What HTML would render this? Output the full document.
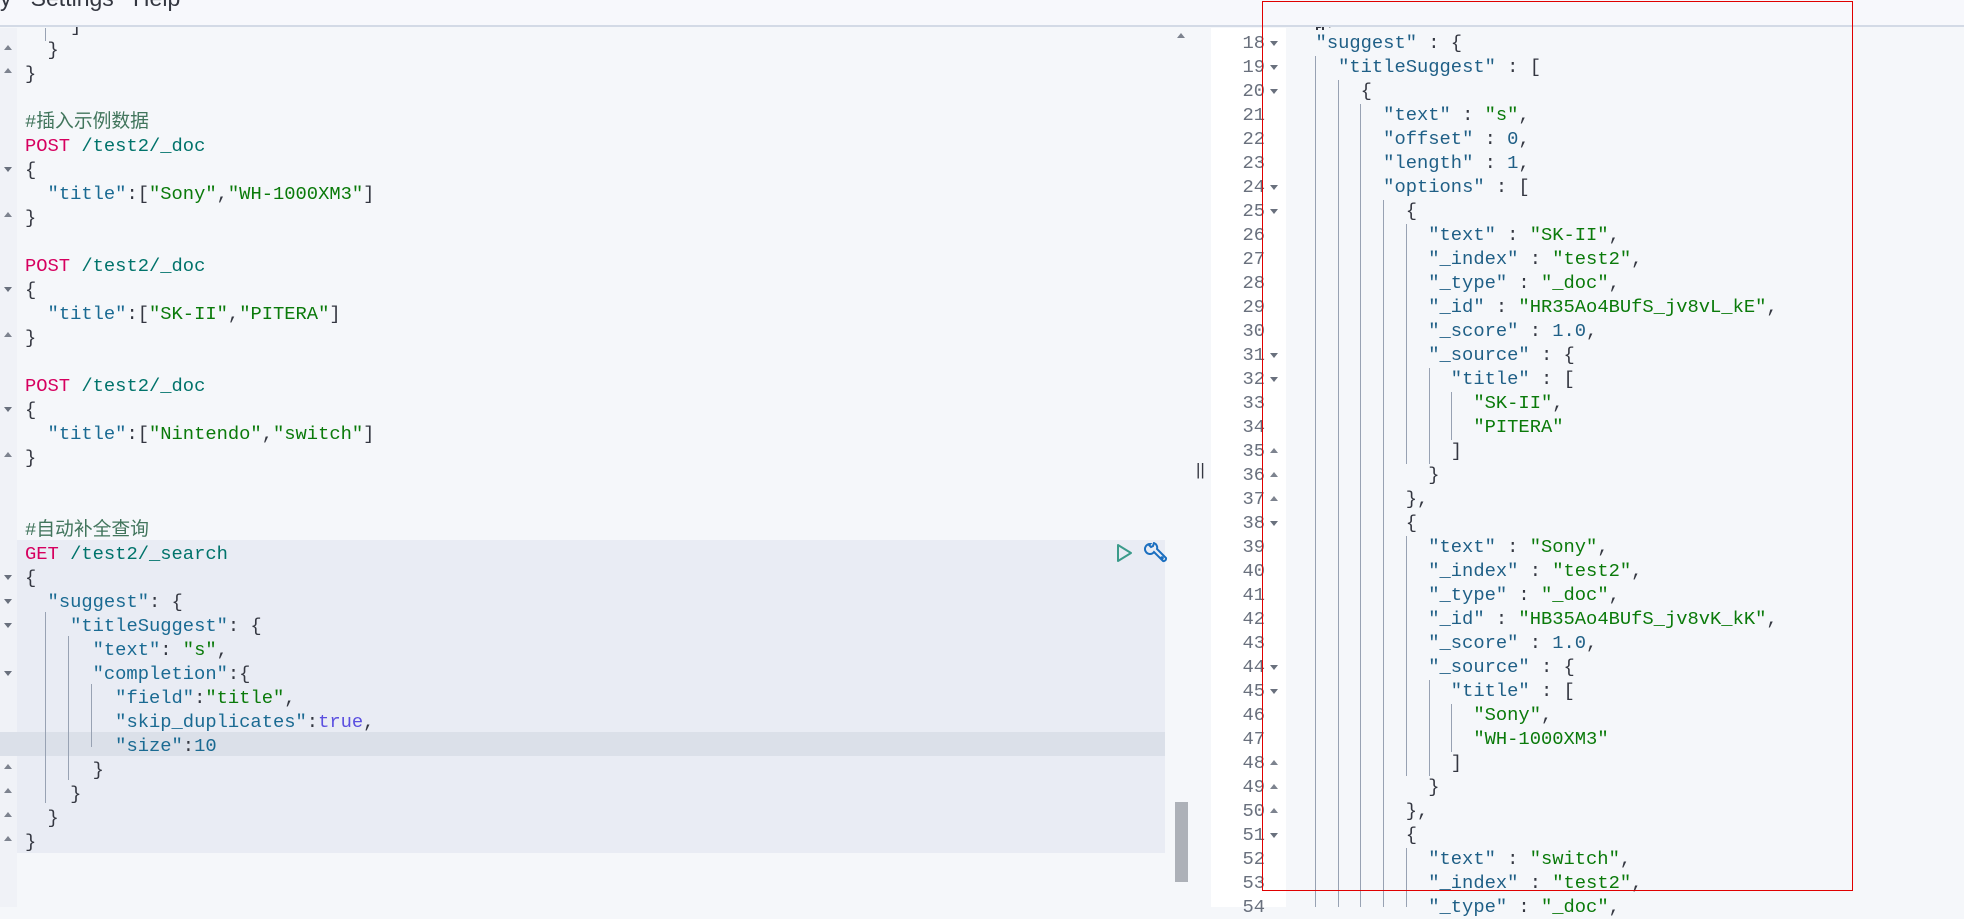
<!DOCTYPE html>
<html><head><meta charset="utf-8"><style>
*{margin:0;padding:0;box-sizing:border-box}
body{width:1964px;height:907px;overflow:hidden;background:#f5f7fa;position:relative;font-family:"Liberation Mono","Noto Sans CJK SC",monospace;font-size:18.8px;color:#343741}
.abs{position:absolute}
.l{position:absolute;height:24px;line-height:24px;white-space:pre}
.m{color:#d6005f}.u{color:#00736b}.k{color:#1a6a92}.s{color:#0a7a0a}.n{color:#1a6a92}.b{color:#5b4fe0}.c{color:#41755c;font-family:"Liberation Mono","Noto Sans CJK SC",monospace}
.rk{color:#1f5f86}.rs{color:#0a7a0a}.rn{color:#1f5f86}
.g{position:absolute;width:1px;background:#98a2b3}
.ln{position:absolute;width:52px;text-align:right;color:#69707d;height:24px;line-height:24px;left:1213px}
.ar{position:absolute;width:0;height:0;border-left:4px solid transparent;border-right:4px solid transparent}
.dn{border-top:5px solid #69707d}.up{border-bottom:5px solid #7d838f}
</style></head><body>
<!-- left gutter -->
<div class="abs" style="left:0;top:28px;width:17px;height:879px;background:#f0f2f7"></div>
<!-- shaded request block -->
<div class="abs" style="left:17px;top:540px;width:1148px;height:313px;background:#e9ecf4"></div>
<div class="abs" style="left:0;top:732px;width:1165px;height:24px;background:#dbe0e9"></div>
<!-- scrollbar -->
<div class="abs" style="left:1175px;top:802px;width:13px;height:80px;background:#adb1b8"></div>
<!-- divider -->
<div class="abs" style="left:1196px;top:460px;font-family:'Liberation Sans',sans-serif;font-size:17px;color:#343741">||</div>
<!-- right gutter -->
<div class="abs" style="left:1211px;top:28px;width:75px;height:879px;background:#fff"></div>
<div class="abs" style="left:1286px;top:28px;width:678px;height:879px;background:#f5f7fa"></div>

<!-- left code -->
<div class="g" style="left:45px;top:28px;height:13px"></div>
<div class="l" style="left:25px;top:14px">    ]</div>
<div class="l" style="left:25px;top:38px">  }</div>
<div class="l" style="left:25px;top:62px">}</div>
<div class="l c" style="left:25px;top:110px">#插入示例数据</div>
<div class="l" style="left:25px;top:134px"><span class="m">POST</span> <span class="u">/test2/_doc</span></div>
<div class="l" style="left:25px;top:158px">{</div>
<div class="l" style="left:25px;top:182px">  <span class="k">"title"</span>:[<span class="s">"Sony"</span>,<span class="s">"WH-1000XM3"</span>]</div>
<div class="l" style="left:25px;top:206px">}</div>
<div class="l" style="left:25px;top:254px"><span class="m">POST</span> <span class="u">/test2/_doc</span></div>
<div class="l" style="left:25px;top:278px">{</div>
<div class="l" style="left:25px;top:302px">  <span class="k">"title"</span>:[<span class="s">"SK-II"</span>,<span class="s">"PITERA"</span>]</div>
<div class="l" style="left:25px;top:326px">}</div>
<div class="l" style="left:25px;top:374px"><span class="m">POST</span> <span class="u">/test2/_doc</span></div>
<div class="l" style="left:25px;top:398px">{</div>
<div class="l" style="left:25px;top:422px">  <span class="k">"title"</span>:[<span class="s">"Nintendo"</span>,<span class="s">"switch"</span>]</div>
<div class="l" style="left:25px;top:446px">}</div>
<div class="l c" style="left:25px;top:518px">#自动补全查询</div>
<div class="l" style="left:25px;top:542px"><span class="m">GET</span> <span class="u">/test2/_search</span></div>
<div class="l" style="left:25px;top:566px">{</div>
<div class="l" style="left:25px;top:590px">  <span class="k">"suggest"</span>: {</div>
<div class="l" style="left:25px;top:614px">    <span class="k">"titleSuggest"</span>: {</div>
<div class="l" style="left:25px;top:638px">      <span class="k">"text"</span>: <span class="s">"s"</span>,</div>
<div class="l" style="left:25px;top:662px">      <span class="k">"completion"</span>:{</div>
<div class="l" style="left:25px;top:686px">        <span class="k">"field"</span>:<span class="s">"title"</span>,</div>
<div class="l" style="left:25px;top:710px">        <span class="k">"skip_duplicates"</span>:<span class="b">true</span>,</div>
<div class="l" style="left:25px;top:734px">        <span class="k">"size"</span>:<span class="n">10</span></div>
<div class="l" style="left:25px;top:758px">      }</div>
<div class="l" style="left:25px;top:782px">    }</div>
<div class="l" style="left:25px;top:806px">  }</div>
<div class="l" style="left:25px;top:830px">}</div>
<div class="g" style="left:45px;top:612px;height:191px"></div>
<div class="g" style="left:68px;top:636px;height:144px"></div>
<div class="g" style="left:91px;top:684px;height:63px"></div>
<!-- play & wrench -->
<svg class="abs" style="left:1115px;top:542px" width="55" height="26" viewBox="0 0 55 26">
<path d="M3 3 L16 11 L3 19 Z" fill="none" stroke="#3b9b8b" stroke-width="2" stroke-linejoin="round"/>
<g fill="none" stroke="#1b6fc0" stroke-width="2" stroke-linecap="round">
<path d="M35 2 a5 5 0 1 0 4 8 l9 9 a2.5 2.5 0 0 0 3 -3 l-9 -9 a5 5 0 0 0 -3 -6 l-1 3 -2 1 -2 -2 z"/>
<circle cx="47" cy="16" r="0.8" fill="#1b6fc0"/></g></svg>
<!-- left fold arrows -->
<div class="ar up" style="left:4px;top:45px"></div>
<div class="ar up" style="left:4px;top:68px"></div>
<div class="ar dn" style="left:4px;top:167px"></div>
<div class="ar up" style="left:4px;top:212px"></div>
<div class="ar dn" style="left:4px;top:287px"></div>
<div class="ar up" style="left:4px;top:332px"></div>
<div class="ar dn" style="left:4px;top:407px"></div>
<div class="ar up" style="left:4px;top:452px"></div>
<div class="ar dn" style="left:4px;top:575px"></div>
<div class="ar dn" style="left:4px;top:599px"></div>
<div class="ar dn" style="left:4px;top:623px"></div>
<div class="ar dn" style="left:4px;top:671px"></div>
<div class="ar up" style="left:4px;top:764px"></div>
<div class="ar up" style="left:4px;top:788px"></div>
<div class="ar up" style="left:4px;top:812px"></div>
<div class="ar up" style="left:4px;top:836px"></div>
<div class="ar up" style="left:1177px;top:33px"></div>

<!-- right code -->
<div class="l" style="left:1293px;top:7px">  },</div>
<div class="l" style="left:1293px;top:31px">  <span class="rk">"suggest"</span> : {</div>
<div class="l" style="left:1293px;top:55px">    <span class="rk">"titleSuggest"</span> : [</div>
<div class="l" style="left:1293px;top:79px">      {</div>
<div class="l" style="left:1293px;top:103px">        <span class="rk">"text"</span> : <span class="rs">"s"</span>,</div>
<div class="l" style="left:1293px;top:127px">        <span class="rk">"offset"</span> : <span class="rn">0</span>,</div>
<div class="l" style="left:1293px;top:151px">        <span class="rk">"length"</span> : <span class="rn">1</span>,</div>
<div class="l" style="left:1293px;top:175px">        <span class="rk">"options"</span> : [</div>
<div class="l" style="left:1293px;top:199px">          {</div>
<div class="l" style="left:1293px;top:223px">            <span class="rk">"text"</span> : <span class="rs">"SK-II"</span>,</div>
<div class="l" style="left:1293px;top:247px">            <span class="rk">"_index"</span> : <span class="rs">"test2"</span>,</div>
<div class="l" style="left:1293px;top:271px">            <span class="rk">"_type"</span> : <span class="rs">"_doc"</span>,</div>
<div class="l" style="left:1293px;top:295px">            <span class="rk">"_id"</span> : <span class="rs">"HR35Ao4BUfS_jv8vL_kE"</span>,</div>
<div class="l" style="left:1293px;top:319px">            <span class="rk">"_score"</span> : <span class="rn">1.0</span>,</div>
<div class="l" style="left:1293px;top:343px">            <span class="rk">"_source"</span> : {</div>
<div class="l" style="left:1293px;top:367px">              <span class="rk">"title"</span> : [</div>
<div class="l" style="left:1293px;top:391px">                <span class="rs">"SK-II"</span>,</div>
<div class="l" style="left:1293px;top:415px">                <span class="rs">"PITERA"</span></div>
<div class="l" style="left:1293px;top:439px">              ]</div>
<div class="l" style="left:1293px;top:463px">            }</div>
<div class="l" style="left:1293px;top:487px">          },</div>
<div class="l" style="left:1293px;top:511px">          {</div>
<div class="l" style="left:1293px;top:535px">            <span class="rk">"text"</span> : <span class="rs">"Sony"</span>,</div>
<div class="l" style="left:1293px;top:559px">            <span class="rk">"_index"</span> : <span class="rs">"test2"</span>,</div>
<div class="l" style="left:1293px;top:583px">            <span class="rk">"_type"</span> : <span class="rs">"_doc"</span>,</div>
<div class="l" style="left:1293px;top:607px">            <span class="rk">"_id"</span> : <span class="rs">"HB35Ao4BUfS_jv8vK_kK"</span>,</div>
<div class="l" style="left:1293px;top:631px">            <span class="rk">"_score"</span> : <span class="rn">1.0</span>,</div>
<div class="l" style="left:1293px;top:655px">            <span class="rk">"_source"</span> : {</div>
<div class="l" style="left:1293px;top:679px">              <span class="rk">"title"</span> : [</div>
<div class="l" style="left:1293px;top:703px">                <span class="rs">"Sony"</span>,</div>
<div class="l" style="left:1293px;top:727px">                <span class="rs">"WH-1000XM3"</span></div>
<div class="l" style="left:1293px;top:751px">              ]</div>
<div class="l" style="left:1293px;top:775px">            }</div>
<div class="l" style="left:1293px;top:799px">          },</div>
<div class="l" style="left:1293px;top:823px">          {</div>
<div class="l" style="left:1293px;top:847px">            <span class="rk">"text"</span> : <span class="rs">"switch"</span>,</div>
<div class="l" style="left:1293px;top:871px">            <span class="rk">"_index"</span> : <span class="rs">"test2"</span>,</div>
<div class="l" style="left:1293px;top:895px">            <span class="rk">"_type"</span> : <span class="rs">"_doc"</span>,</div>
<!-- right guides -->
<div class="g" style="left:1315px;top:56px;height:851px"></div>
<div class="g" style="left:1338px;top:80px;height:827px"></div>
<div class="g" style="left:1360px;top:104px;height:803px"></div>
<div class="g" style="left:1383px;top:200px;height:707px"></div>
<div class="g" style="left:1406px;top:224px;height:240px"></div>
<div class="g" style="left:1406px;top:536px;height:240px"></div>
<div class="g" style="left:1406px;top:848px;height:59px"></div>
<div class="g" style="left:1429px;top:368px;height:96px"></div>
<div class="g" style="left:1429px;top:680px;height:96px"></div>
<div class="g" style="left:1451px;top:392px;height:48px"></div>
<div class="g" style="left:1451px;top:704px;height:48px"></div>
<!-- line numbers -->
<div class="ln" style="top:31px">18</div><div class="ln" style="top:55px">19</div><div class="ln" style="top:79px">20</div><div class="ln" style="top:103px">21</div><div class="ln" style="top:127px">22</div><div class="ln" style="top:151px">23</div><div class="ln" style="top:175px">24</div><div class="ln" style="top:199px">25</div><div class="ln" style="top:223px">26</div><div class="ln" style="top:247px">27</div><div class="ln" style="top:271px">28</div><div class="ln" style="top:295px">29</div><div class="ln" style="top:319px">30</div><div class="ln" style="top:343px">31</div><div class="ln" style="top:367px">32</div><div class="ln" style="top:391px">33</div><div class="ln" style="top:415px">34</div><div class="ln" style="top:439px">35</div><div class="ln" style="top:463px">36</div><div class="ln" style="top:487px">37</div><div class="ln" style="top:511px">38</div><div class="ln" style="top:535px">39</div><div class="ln" style="top:559px">40</div><div class="ln" style="top:583px">41</div><div class="ln" style="top:607px">42</div><div class="ln" style="top:631px">43</div><div class="ln" style="top:655px">44</div><div class="ln" style="top:679px">45</div><div class="ln" style="top:703px">46</div><div class="ln" style="top:727px">47</div><div class="ln" style="top:751px">48</div><div class="ln" style="top:775px">49</div><div class="ln" style="top:799px">50</div><div class="ln" style="top:823px">51</div><div class="ln" style="top:847px">52</div><div class="ln" style="top:871px">53</div><div class="ln" style="top:895px">54</div>
<!-- right arrows -->
<div class="ar dn" style="left:1270px;top:41px"></div><div class="ar dn" style="left:1270px;top:65px"></div><div class="ar dn" style="left:1270px;top:89px"></div><div class="ar dn" style="left:1270px;top:185px"></div><div class="ar dn" style="left:1270px;top:209px"></div><div class="ar dn" style="left:1270px;top:353px"></div><div class="ar dn" style="left:1270px;top:377px"></div>
<div class="ar up" style="left:1270px;top:448px"></div><div class="ar up" style="left:1270px;top:472px"></div><div class="ar up" style="left:1270px;top:496px"></div><div class="ar dn" style="left:1270px;top:521px"></div><div class="ar dn" style="left:1270px;top:665px"></div><div class="ar dn" style="left:1270px;top:689px"></div><div class="ar up" style="left:1270px;top:760px"></div><div class="ar up" style="left:1270px;top:784px"></div><div class="ar up" style="left:1270px;top:808px"></div><div class="ar dn" style="left:1270px;top:833px"></div>

<!-- top bar (on top) -->
<div class="abs" style="left:0;top:0;width:1964px;height:27px;background:#f7f8fc;border-bottom:2px solid #d3dae6"></div>
<div class="abs" style="left:0;top:-15px;font-family:'Liberation Sans',sans-serif;font-size:23px;color:#343741;white-space:pre">y   Settings   Help</div>
<!-- partial code edges peeking under bar -->
<div class="abs" style="left:1316px;top:27px;width:8px;height:3px;border-left:2px solid #343741;border-right:2px solid #343741"></div>
<!-- red box -->
<div class="abs" style="left:1262px;top:1px;width:591px;height:890px;border:1px solid #e00000"></div>
</body></html>
